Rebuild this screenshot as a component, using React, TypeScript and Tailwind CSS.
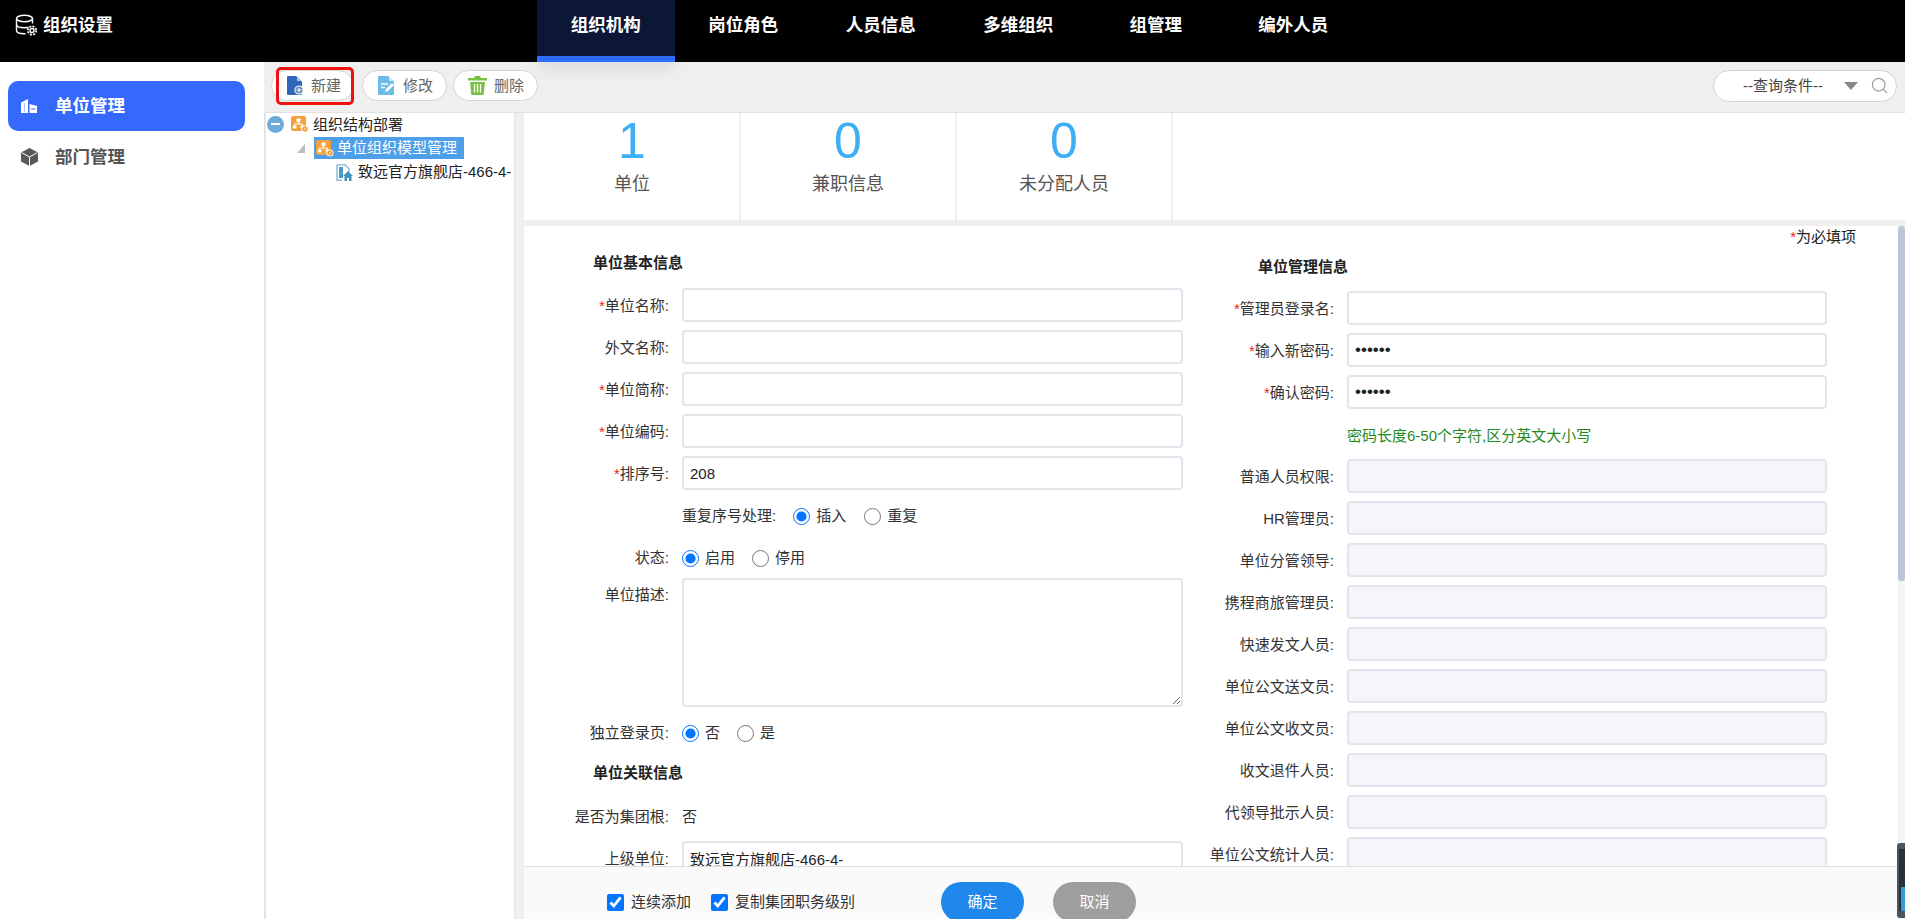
import { Search } from 'lucide-react';

const navTabs = ['组织机构', '岗位角色', '人员信息', '多维组织', '组管理', '编外人员'];
const stats = [
  { value: 1, label: '单位' },
  { value: 0, label: '兼职信息' },
  { value: 0, label: '未分配人员' },
];
const staffFields = [
  '普通人员权限',
  'HR管理员',
  '单位分管领导',
  '携程商旅管理员',
  '快速发文人员',
  '单位公文送文员',
  '单位公文收文员',
  '收文退件人员',
  '代领导批示人员',
  '单位公文统计人员',
];

const fieldBase = 'h-[34px] w-full rounded-[4px] border-2 border-[#e3e4ec] px-[6px] text-[#222] outline-none';
const textField = `${fieldBase} text-[15px]`;
const passwordField = `${fieldBase} text-[17px]`;

function DbGearIcon() {
  return (
    <svg width="24" height="24" viewBox="0 0 24 24" fill="none" stroke="#fff" strokeWidth="1.4">
      <ellipse cx="10.5" cy="5.5" rx="8" ry="3.2" />
      <path d="M2.5 5.5v12c0 1.8 3.4 3.2 8 3.2h1M18.5 5.5v5M2.5 11.5c0 1.8 3.4 3.2 8 3.2 1.5 0 2.8-.1 4-.5" />
      <circle cx="18" cy="17.5" r="2" />
      <circle cx="18" cy="17.5" r="4.2" strokeWidth="1.8" strokeDasharray="2 1.3" />
    </svg>
  );
}

function BuildingIcon() {
  return (
    <svg width="16" height="14" viewBox="0 0 16 14" fill="#fff">
      <path d="M0 3.5 7 0v14H0z" />
      <path d="M8.5 5 16 7v7H8.5z" />
      <path d="M10 9.5h4.5v1H10z" fill="#3469fb" />
      <path d="M3 4h1v9H3z" fill="#3469fb" opacity=".4" />
    </svg>
  );
}

function CubeIcon() {
  return (
    <svg width="17" height="18" viewBox="0 0 17 18">
      <path d="M8.5 0 17 4.5v9L8.5 18 0 13.5v-9z" fill="#5a5a5a" />
      <path d="M0.5 4.5 8.5 9l8-4.5M8.5 9v9" fill="none" stroke="#fff" strokeWidth="1" />
    </svg>
  );
}

function DocPlusIcon() {
  return (
    <svg width="17" height="19" viewBox="0 0 17 19">
      <path d="M1 0h8l6 6v12a1 1 0 0 1-1 1H1a1 1 0 0 1-1-1V1a1 1 0 0 1 1-1z" fill="#2f66b8" />
      <path d="M10 0l5 5h-5z" fill="#a9c4ea" />
      <circle cx="12" cy="14" r="4.6" fill="#fff" />
      <circle cx="12" cy="14" r="3.6" fill="#6f8fb8" />
      <path d="M12 12v4M10 14h4" stroke="#fff" strokeWidth="1" />
    </svg>
  );
}

function DocEditIcon() {
  return (
    <svg width="18" height="19" viewBox="0 0 18 19">
      <path d="M1 0h9l6 6v12a1 1 0 0 1-1 1H1a1 1 0 0 1-1-1V1a1 1 0 0 1 1-1z" fill="#6dbbe6" />
      <path d="M11 0l5 5h-5z" fill="#c4e4f6" />
      <path d="M3 8h7M3 11.5h4" stroke="#fff" strokeWidth="1.6" />
      <path d="M7 16l1-3 6-6 2 2-6 6z" fill="#fff" />
    </svg>
  );
}

function TrashIcon() {
  return (
    <svg width="19" height="19" viewBox="0 0 19 19">
      <path d="M7 0h5l1 2h6v2.4H0V2h6z" fill="#7ac143" />
      <path d="M2 6h15l-1.2 12a1 1 0 0 1-1 1H4.200a1 1 0 0 1-1-1z" fill="#7ac143" />
      <path d="M6.500 8v8.500M9.500 8v8.500M12.500 8v8.500" stroke="#fff" strokeWidth="1.3" />
    </svg>
  );
}

function OrgIcon() {
  return (
    <svg width="18" height="17" viewBox="0 0 18 17">
      <rect width="15" height="15" rx="2" fill="#f5a03c" />
      <path d="M5.500 2.500h4v3.500h-4zM1.800 9.500h3.600v3h-3.600zM9.600 9.500h3.600v3H9.600z" fill="#fff" />
      <path d="M7.500 6v2H3.500v1.500M7.500 8h4v1.500" stroke="#fff" strokeWidth="1" fill="none" />
      <circle cx="14" cy="13" r="3.600" fill="#fff" />
      <circle cx="14" cy="13" r="2.800" fill="#f5a03c" />
      <path d="M12.800 14.200l2.400-2.400" stroke="#fff" strokeWidth="1" />
    </svg>
  );
}

function UnitIcon() {
  return (
    <svg width="17" height="17" viewBox="0 0 17 17">
      <path d="M1 .8h8l4 4v3M1 .8v15.400h5" fill="none" stroke="#8fc0da" strokeWidth="1.600" />
      <path d="M3 3h4v11H3z" fill="#4b9cc4" />
      <path d="M12 7l5 5h-1.500v5H13v-3h-2v3H8.500v-5H7z" fill="#3f93bd" />
    </svg>
  );
}

function MinusIcon() {
  return (
    <span className="flex h-[17px] w-[17px] items-center justify-center rounded-full bg-[#6fabd9]">
      <span className="h-[2px] w-[9px] bg-white" />
    </span>
  );
}

function FieldLabel({ text, required }: { text: string; required?: boolean }) {
  return (
    <span className="flex h-[34px] items-center justify-end whitespace-nowrap pt-[2px] text-[15px] text-[#333]">
      {required && <span className="text-[#f02020]">*</span>}
      {text}:
    </span>
  );
}

function RadioOption({ label, checked, name }: { label: string; checked?: boolean; name: string }) {
  return (
    <label className="flex items-center gap-[6px] text-[15px] text-[#333]">
      <input type="radio" name={name} defaultChecked={checked} className="m-0 h-[17px] w-[17px]" />
      {label}
    </label>
  );
}

function ToolButton({ icon, label, className }: { icon: React.ReactNode; label: string; className: string }) {
  return (
    <button className={`flex h-[31px] items-center gap-[7px] rounded-full border border-[#d4d4d4] bg-white text-[15px] text-[#666] ${className}`}>
      {icon}
      <span className="pt-[2px]">{label}</span>
    </button>
  );
}

export default function App() {
  return (
    <div className="flex h-[919px] w-full flex-col overflow-hidden bg-[#efefef] font-['Liberation_Sans','Noto_Sans_CJK_SC',sans-serif]">
      {/* Top bar */}
      <header className="flex h-[62px] shrink-0 bg-black text-white">
        <div className="flex w-[537px] items-center gap-[5px] pb-[12px] pl-[14px] text-[17.5px] font-bold">
          <DbGearIcon />
          组织设置
        </div>
        {navTabs.map((tab, i) => (
          <div
            key={tab}
            className={
              i === 0
                ? 'relative flex w-[137.5px] items-center justify-center border-b-[6px] border-[#2f6bff] bg-[#0b1735] pb-[6px] text-[17.5px] font-bold shadow-[0_8px_14px_rgba(0,0,0,0.07)]'
                : 'flex w-[137.5px] items-center justify-center pb-[12px] text-[17.5px] font-bold'
            }
          >
            {tab}
          </div>
        ))}
      </header>

      <div className="flex min-h-0 flex-1">
        {/* Left menu */}
        <aside className="w-[264px] shrink-0 bg-white pl-[8px] pt-[19px]">
          <div className="flex h-[50px] w-[237px] items-center gap-[18px] rounded-[10px] bg-[#3469fb] pl-[13px] text-[17.5px] font-bold text-white">
            <BuildingIcon />
            <span className="pt-[1px]">单位管理</span>
          </div>
          <div className="mt-[1px] flex h-[50px] w-[237px] items-center gap-[17px] pl-[13px] text-[17.5px] font-bold text-[#555]">
            <CubeIcon />
            部门管理
          </div>
        </aside>

        <div className="flex min-w-0 flex-1 flex-col">
          {/* Toolbar */}
          <div className="flex h-[51px] shrink-0 items-center border-b border-[#e2e2e2] pb-[3px] pl-[7px] pr-[8px]">
            <div className="relative">
              <ToolButton icon={<DocPlusIcon />} label="新建" className="w-[83px] pl-[15px]" />
              <div className="absolute -top-[3px] left-[5px] h-[38px] w-[78px] rounded-[5px] border-[3px] border-[#f01010]" />
            </div>
            <ToolButton icon={<DocEditIcon />} label="修改" className="ml-[8px] w-[85px] pl-[15px]" />
            <ToolButton icon={<TrashIcon />} label="删除" className="ml-[6px] w-[85px] pl-[14px]" />
            <div className="ml-auto flex h-[32px] w-[184px] items-center rounded-full border border-[#d4d4d4] bg-white pl-[29px] text-[15px] text-[#444]">
              <span className="pt-[1px]">--查询条件--</span>
              <span className="ml-[21px] h-0 w-0 border-x-[7px] border-t-[8px] border-x-transparent border-t-[#888]" />
              <Search size={19} strokeWidth={1.5} className="ml-[12px] text-[#999]" />
            </div>
          </div>

          <div className="flex min-h-0 flex-1">
            {/* Tree */}
            <div className="flex w-[251px] shrink-0 flex-col gap-[2px] border-l-2 border-r border-[#e4e4e4] bg-white text-[15px] text-[#222]">
              <div className="flex h-[22px] items-center pl-[1px]">
                <MinusIcon />
                <span className="ml-[7px]"><OrgIcon /></span>
                <span className="ml-[4px] pt-[2px]">组织结构部署</span>
              </div>
              <div className="flex h-[22px] items-center pl-[31px]">
                <svg width="8" height="9" viewBox="0 0 8 9"><path d="M8 0v9H0z" fill="#bdbdbd" /></svg>
                <div className="ml-[9px] flex h-[22px] w-[150px] items-center bg-[#4d9fea] pl-[2px] text-white">
                  <OrgIcon />
                  <span className="ml-[3px] pt-[1px]">单位组织模型管理</span>
                </div>
              </div>
              <div className="flex h-[22px] items-center whitespace-nowrap pl-[70px]">
                <UnitIcon />
                <span className="ml-[5px] pt-[1px]">致远官方旗舰店-466-4-</span>
              </div>
            </div>

            <div className="ml-[9px] flex min-w-0 flex-1 flex-col bg-white">
              {/* Counters */}
              <div className="flex h-[107px] shrink-0 pl-[1px]">
                {stats.map(s => (
                  <div key={s.label} className="flex w-[216px] flex-col items-center border-r-2 border-[#f0f0f0] pt-[3px]">
                    <span className="text-[50px] leading-[50px] text-[#3eaef5]">{s.value}</span>
                    <span className="mt-[6px] text-[18px] leading-[24px] text-[#555]">{s.label}</span>
                  </div>
                ))}
              </div>
              <div className="h-[6px] shrink-0 bg-[#f0efee]" />

              <div className="relative flex min-h-0 flex-1">
                <div className="flex min-w-0 flex-1 flex-col">
                  <div className="min-h-0 flex-1 overflow-hidden">
                    <div className="flex h-[22px] items-center justify-end pr-[42px] text-[15px] text-[#222]">
                      <span className="text-[#f02020]">*</span>为必填项
                    </div>
                    <div className="flex">
                      {/* Basic info column */}
                      <div className="w-[666px] shrink-0 pl-[2px] pt-[5px]">
                        <h3 className="ml-[67px] h-[20px] text-[15px] font-bold leading-[20px] text-[#222]">单位基本信息</h3>
                        <div className="mt-[15px] grid grid-cols-[143px_501px] items-start gap-x-[13px] gap-y-[8px]">
                          <FieldLabel text="单位名称" required />
                          <input className={textField} />
                          <FieldLabel text="外文名称" />
                          <input className={textField} />
                          <FieldLabel text="单位简称" required />
                          <input className={textField} />
                          <FieldLabel text="单位编码" required />
                          <input className={textField} />
                          <FieldLabel text="排序号" required />
                          <input className={textField} defaultValue="208" />
                          <span />
                          <div className="flex h-[34px] items-center pt-[2px] text-[15px] text-[#333]">
                            <span>重复序号处理:</span>
                            <div className="ml-[17px]"><RadioOption label="插入" name="dup" checked /></div>
                            <div className="ml-[18px]"><RadioOption label="重复" name="dup" /></div>
                          </div>
                          <FieldLabel text="状态" />
                          <div className="flex h-[34px] items-center gap-[17px] pt-[2px]">
                            <RadioOption label="启用" name="state" checked />
                            <RadioOption label="停用" name="state" />
                          </div>
                          <span className="-mt-[4px] flex h-[34px] items-center justify-end text-[15px] text-[#333]">单位描述:</span>
                          <textarea className="-mt-[4px] block h-[129px] w-full rounded-[4px] border-2 border-[#e3e4ec] outline-none" />
                          <FieldLabel text="独立登录页" />
                          <div className="flex h-[34px] items-center gap-[17px] pt-[2px]">
                            <RadioOption label="否" name="login" checked />
                            <RadioOption label="是" name="login" />
                          </div>
                        </div>
                        <h3 className="ml-[67px] mt-[14px] h-[20px] text-[15px] font-bold leading-[20px] text-[#222]">单位关联信息</h3>
                        <div className="mt-[16px] grid grid-cols-[143px_501px] items-start gap-x-[13px] gap-y-[8px]">
                          <FieldLabel text="是否为集团根" />
                          <span className="flex h-[34px] items-center pt-[2px] text-[15px] text-[#333]">否</span>
                          <FieldLabel text="上级单位" />
                          <input className={textField} defaultValue="致远官方旗舰店-466-4-" />
                        </div>
                      </div>

                      {/* Admin info column */}
                      <div className="w-[650px] shrink-0 pt-[9px]">
                        <h3 className="ml-[68px] h-[20px] text-[15px] font-bold leading-[20px] text-[#222]">单位管理信息</h3>
                        <div className="mt-[14px] grid grid-cols-[144px_480px] items-start gap-x-[13px] gap-y-[8px]">
                          <FieldLabel text="管理员登录名" required />
                          <input className={textField} />
                          <FieldLabel text="输入新密码" required />
                          <input type="password" className={passwordField} defaultValue="123456" />
                          <FieldLabel text="确认密码" required />
                          <input type="password" className={passwordField} defaultValue="123456" />
                          <span />
                          <p className="mb-[5px] mt-[9px] h-[20px] text-[15px] leading-[20px] text-[#1f8a1f]">密码长度6-50个字符,区分英文大小写</p>
                          {staffFields.map(name => (
                            <div key={name} className="contents">
                              <FieldLabel text={name} />
                              <input disabled className={`${textField} bg-[#f5f6fa]`} />
                            </div>
                          ))}
                        </div>
                      </div>
                    </div>
                  </div>

                  {/* Bottom actions */}
                  <footer className="flex h-[53px] shrink-0 border-t border-[#dedede] bg-[#fafafa] pl-[83px] pt-[15px]">
                    <div className="flex h-[40px] w-[334px] items-center text-[15px] text-[#333]">
                      <label className="flex items-center gap-[7px]">
                        <input type="checkbox" defaultChecked className="m-0 h-[17px] w-[17px]" />
                        连续添加
                      </label>
                      <label className="ml-[20px] flex items-center gap-[7px]">
                        <input type="checkbox" defaultChecked className="m-0 h-[17px] w-[17px]" />
                        复制集团职务级别
                      </label>
                    </div>
                    <button className="h-[40px] w-[83px] shrink-0 rounded-full bg-[#2087ec] text-[15px] text-white">确定</button>
                    <button className="ml-[29px] h-[40px] w-[83px] shrink-0 rounded-full bg-[#9e9e9e] text-[15px] text-white">取消</button>
                  </footer>
                </div>

                {/* Scrollbar */}
                <div className="w-[7px] shrink-0 bg-[#f4f4f4]">
                  <div className="h-[355px] rounded-[3px] bg-[#bcc6d6]" />
                </div>

                {/* Overlay widget pinned to the window edge */}
                <div className="absolute bottom-[1px] right-0 flex h-[75px] w-[8px] justify-end rounded-l-[3px] bg-[#4a5560] pl-[2px] pt-[6px]">
                  <div className="relative h-[62px] w-[6px] bg-[#2a303a]">
                    <div className="absolute bottom-0 left-[2px] h-[24px] w-[4px] bg-[#2f9fd8]" />
                  </div>
                </div>
              </div>
            </div>
          </div>
        </div>
      </div>
    </div>
  );
}
